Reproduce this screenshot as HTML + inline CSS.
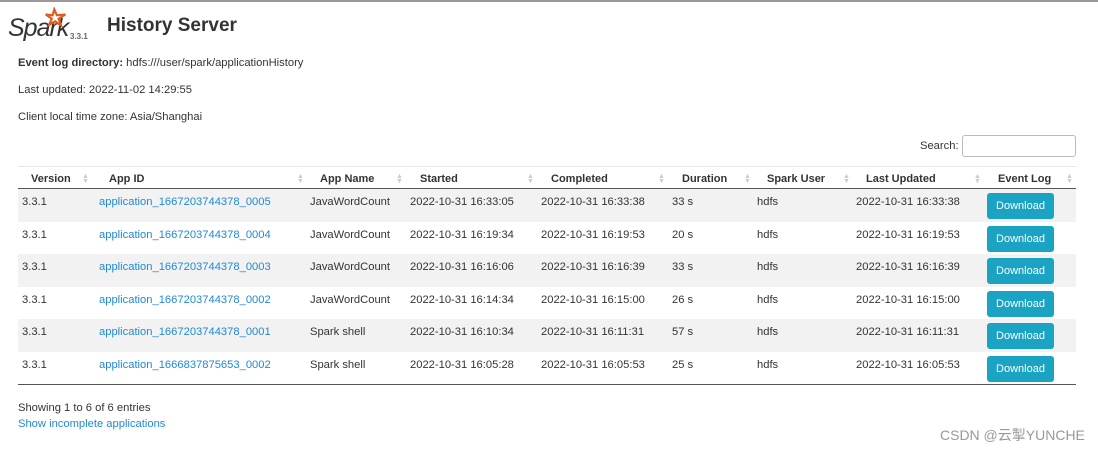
<!DOCTYPE html><html><head><style>
body{margin:0;width:1098px;height:450px;background:#fff;font-family:"Liberation Sans",Arial,sans-serif;color:#333;font-size:11.2px;position:relative;overflow:hidden}
.a{position:absolute;white-space:nowrap}
a{color:#1f8ad2;text-decoration:none}
.row{position:absolute;left:18px;width:1058px;height:32.6px}
.row.g{background:#f2f2f2}
.c{position:absolute;top:7px}
.btn{position:absolute;left:969px;top:4px;width:67px;height:26px;background:#1ba3c4;border-radius:3px;color:#fff;font-size:11px;line-height:26px;text-align:center}
.h{position:absolute;top:173px;font-weight:bold;font-size:11px}
.s{position:absolute;top:174px;color:#ccc;font-size:7px;line-height:5px}
</style></head><body>
<div class="a" style="left:0;top:0;width:1098px;height:2px;background:#999"></div>
<div class="a" style="left:8px;top:14px;font-style:italic;font-size:25px;color:#333;letter-spacing:-1px;font-family:'Liberation Sans',sans-serif">Spark</div>
<svg class="a" style="left:44px;top:7px" width="24" height="20" viewBox="0 0 28 22"><path d="M12 2 L15 9 L25 8 L17 13 L20 21 L13 16 L6 20 L9 13 L2 8 L10 9 Z" fill="none" stroke="#e25a1c" stroke-width="2.5"/></svg>
<div class="a" style="left:70px;top:32px;font-size:8px;font-weight:bold;color:#666">3.3.1</div>
<div class="a" style="left:107px;top:15px;font-size:19px;font-weight:bold;color:#333">History Server</div>
<div class="a" style="left:18px;top:57px"><b>Event log directory:</b> hdfs:///user/spark/applicationHistory</div>
<div class="a" style="left:18px;top:84px">Last updated: 2022-11-02 14:29:55</div>
<div class="a" style="left:18px;top:111px">Client local time zone: Asia/Shanghai</div>
<div class="a" style="left:920px;top:140px">Search:</div>
<div class="a" style="left:962px;top:135px;width:112px;height:20px;border:1px solid #bbb;border-radius:3px"></div>
<div class="a" style="left:18px;top:166px;width:1058px;height:1px;background:#e8e8e8"></div>
<div class="h" style="left:31px">Version</div><div class="h" style="left:109px">App ID</div><div class="h" style="left:320px">App Name</div><div class="h" style="left:420px">Started</div><div class="h" style="left:551px">Completed</div><div class="h" style="left:682px">Duration</div><div class="h" style="left:767px">Spark User</div><div class="h" style="left:866px">Last Updated</div><div class="h" style="left:998px">Event Log</div>
<div class="s" style="left:82px">▲<br>▼</div><div class="s" style="left:297px">▲<br>▼</div><div class="s" style="left:396px">▲<br>▼</div><div class="s" style="left:527px">▲<br>▼</div><div class="s" style="left:658px">▲<br>▼</div><div class="s" style="left:744px">▲<br>▼</div><div class="s" style="left:843px">▲<br>▼</div><div class="s" style="left:974px">▲<br>▼</div><div class="s" style="left:1066px">▲<br>▼</div>
<div class="a" style="left:18px;top:188px;width:1058px;height:1px;background:#555"></div>

<div class="row g" style="top:189px"><span class="c" style="left:4px">3.3.1</span><a class="c" style="left:81px">application_1667203744378_0005</a><span class="c" style="left:292px">JavaWordCount</span><span class="c" style="left:392px">2022-10-31 16:33:05</span><span class="c" style="left:523px">2022-10-31 16:33:38</span><span class="c" style="left:654px">33 s</span><span class="c" style="left:739px">hdfs</span><span class="c" style="left:838px">2022-10-31 16:33:38</span><div class="btn">Download</div></div>
<div class="row" style="top:221.6px"><span class="c" style="left:4px">3.3.1</span><a class="c" style="left:81px">application_1667203744378_0004</a><span class="c" style="left:292px">JavaWordCount</span><span class="c" style="left:392px">2022-10-31 16:19:34</span><span class="c" style="left:523px">2022-10-31 16:19:53</span><span class="c" style="left:654px">20 s</span><span class="c" style="left:739px">hdfs</span><span class="c" style="left:838px">2022-10-31 16:19:53</span><div class="btn">Download</div></div>
<div class="row g" style="top:254.2px"><span class="c" style="left:4px">3.3.1</span><a class="c" style="left:81px">application_1667203744378_0003</a><span class="c" style="left:292px">JavaWordCount</span><span class="c" style="left:392px">2022-10-31 16:16:06</span><span class="c" style="left:523px">2022-10-31 16:16:39</span><span class="c" style="left:654px">33 s</span><span class="c" style="left:739px">hdfs</span><span class="c" style="left:838px">2022-10-31 16:16:39</span><div class="btn">Download</div></div>
<div class="row" style="top:286.8px"><span class="c" style="left:4px">3.3.1</span><a class="c" style="left:81px">application_1667203744378_0002</a><span class="c" style="left:292px">JavaWordCount</span><span class="c" style="left:392px">2022-10-31 16:14:34</span><span class="c" style="left:523px">2022-10-31 16:15:00</span><span class="c" style="left:654px">26 s</span><span class="c" style="left:739px">hdfs</span><span class="c" style="left:838px">2022-10-31 16:15:00</span><div class="btn">Download</div></div>
<div class="row g" style="top:319.4px"><span class="c" style="left:4px">3.3.1</span><a class="c" style="left:81px">application_1667203744378_0001</a><span class="c" style="left:292px">Spark shell</span><span class="c" style="left:392px">2022-10-31 16:10:34</span><span class="c" style="left:523px">2022-10-31 16:11:31</span><span class="c" style="left:654px">57 s</span><span class="c" style="left:739px">hdfs</span><span class="c" style="left:838px">2022-10-31 16:11:31</span><div class="btn">Download</div></div>
<div class="row" style="top:352px"><span class="c" style="left:4px">3.3.1</span><a class="c" style="left:81px">application_1666837875653_0002</a><span class="c" style="left:292px">Spark shell</span><span class="c" style="left:392px">2022-10-31 16:05:28</span><span class="c" style="left:523px">2022-10-31 16:05:53</span><span class="c" style="left:654px">25 s</span><span class="c" style="left:739px">hdfs</span><span class="c" style="left:838px">2022-10-31 16:05:53</span><div class="btn">Download</div></div>
<div class="a" style="left:18px;top:384px;width:1058px;height:1px;background:#555"></div>
<div class="a" style="left:18px;top:402px">Showing 1 to 6 of 6 entries</div>
<a class="a" style="left:18px;top:418px">Show incomplete applications</a>
<div class="a" style="left:940px;top:425px;font-size:14px;color:#999;font-family:'Liberation Sans','Noto Sans CJK SC',sans-serif">CSDN @云掣YUNCHE</div>
</body></html>
